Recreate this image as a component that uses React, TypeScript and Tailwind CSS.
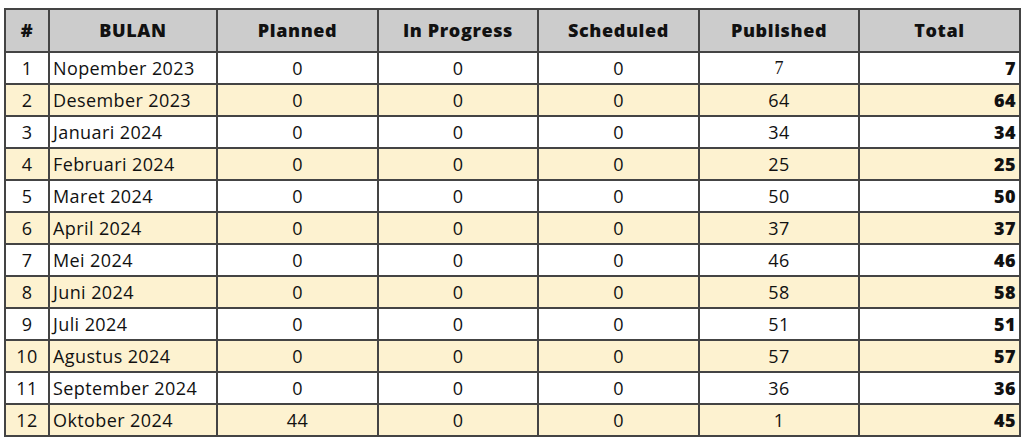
import React from "react";

const rows: [number, string, number, number, number, number, number][] = [
  [1, "Nopember 2023", 0, 0, 0, 7, 7],
  [2, "Desember 2023", 0, 0, 0, 64, 64],
  [3, "Januari 2024", 0, 0, 0, 34, 34],
  [4, "Februari 2024", 0, 0, 0, 25, 25],
  [5, "Maret 2024", 0, 0, 0, 50, 50],
  [6, "April 2024", 0, 0, 0, 37, 37],
  [7, "Mei 2024", 0, 0, 0, 46, 46],
  [8, "Juni 2024", 0, 0, 0, 58, 58],
  [9, "Juli 2024", 0, 0, 0, 51, 51],
  [10, "Agustus 2024", 0, 0, 0, 57, 57],
  [11, "September 2024", 0, 0, 0, 36, 36],
  [12, "Oktober 2024", 44, 0, 0, 1, 45],
];

const headers = ["#", "BULAN", "Planned", "In Progress", "Scheduled", "Published", "Total"];

export default function App() {
  return (
    <div className="w-[1024px] h-[446px] bg-white pt-[8px] pl-[4px] font-['Open_Sans',sans-serif] text-[#111]">
      <table className="table-fixed border-collapse w-[1015px]">
        <colgroup>
          <col className="w-[44px]" />
          <col className="w-[168px]" />
          <col className="w-[161px]" />
          <col className="w-[160px]" />
          <col className="w-[161px]" />
          <col className="w-[160px]" />
          <col className="w-[161px]" />
        </colgroup>
        <thead>
          <tr className="h-[43px] bg-[#cccccc]">
            {headers.map((h) => (
              <th
                key={h}
                className="border-2 border-[#444] text-center text-[18px] tracking-[0.6px] font-extrabold p-0"
              >
                {h}
              </th>
            ))}
          </tr>
        </thead>
        <tbody>
          {rows.map((r, i) => (
            <tr key={r[0]} className={`h-[32px] ${i % 2 === 1 ? "bg-[#fdf2d0]" : "bg-white"}`}>
              <td className="border-2 border-[#444] text-center text-[18px] tracking-[0.4px] p-0">{r[0]}</td>
              <td className="border-2 border-[#444] text-left text-[18px] tracking-[0.4px] px-[3px] py-0 whitespace-nowrap">{r[1]}</td>
              <td className="border-2 border-[#444] text-center text-[18px] tracking-[0.4px] p-0">{r[2]}</td>
              <td className="border-2 border-[#444] text-center text-[18px] tracking-[0.4px] p-0">{r[3]}</td>
              <td className="border-2 border-[#444] text-center text-[18px] tracking-[0.4px] p-0">{r[4]}</td>
              <td
                className={`border-2 border-[#444] text-center p-0 ${
                  i === 0 ? "font-['Liberation_Serif',serif] text-[18px]" : "text-[18px] tracking-[0.4px]"
                }`}
              >
                {r[5]}
              </td>
              <td className="border-2 border-[#444] text-right text-[18px] tracking-[0.4px] font-extrabold px-[3px] py-0">{r[6]}</td>
            </tr>
          ))}
        </tbody>
      </table>
    </div>
  );
}
